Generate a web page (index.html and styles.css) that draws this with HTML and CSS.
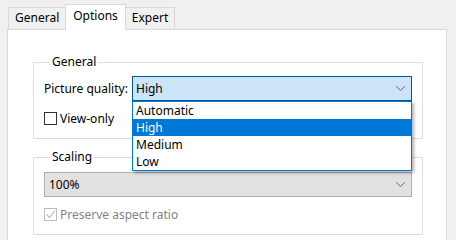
FILE: index.html
```html
<!DOCTYPE html>
<html>
<head>
	<title>Options</title>
	<meta charset="utf-8">
	<link rel="stylesheet" href="styles.css">
</head>
<body>
<div class="tabs">
	<div class="tab">General</div>
	<div class="tab active">Options</div>
	<div class="tab">Expert</div>
</div>
<div class="panel">
	<fieldset class="group">
		<legend>General</legend>
		<div class="row">
			<label class="field-label">Picture quality:</label>
			<div class="combo-wrap">
				<div class="combo focused">
					<span>High</span>
					<svg class="chevron" width="9" height="5" viewBox="0 0 9 5"><path d="M0.5 0.5l4 4 4-4" fill="none" stroke="#606060" stroke-width="1"/></svg>
				</div>
				<ul class="dropdown">
					<li>Automatic</li>
					<li class="selected">High</li>
					<li>Medium</li>
					<li>Low</li>
				</ul>
			</div>
		</div>
		<div class="check-row">
			<span class="box"></span>
			<span>View-only</span>
		</div>
	</fieldset>

	<fieldset class="group scaling">
		<legend>Scaling</legend>
		<div class="combo disabled-combo">
			<span>100%</span>
			<svg class="chevron" width="9" height="5" viewBox="0 0 9 5"><path d="M0.5 0.5l4 4 4-4" fill="none" stroke="#606060" stroke-width="1"/></svg>
		</div>
		<div class="check-row disabled">
			<span class="box">
				<svg width="11" height="11" viewBox="0 0 11 11"><path d="M1.5 5.5l3 3 5.5-7" fill="none" stroke="#bcbcbc" stroke-width="1.2"/></svg>
			</span>
			<span>Preserve aspect ratio</span>
		</div>
	</fieldset>
</div>
</body>
</html>
```

FILE: styles.css
```css
body{
	margin: 0;
	background-color: #f0f0f0;
	font-family: "Noto Sans", sans-serif;
	font-size: 12px;
	color: #000;
	overflow: hidden;
}
.tabs{
	display: flex;
	align-items: flex-end;
	height: 29px;
	padding-left: 8px;
}
.tab{
	height: 21px;
	line-height: 20px;
	padding: 0 6px;
	border: 1px solid #d9d9d9;
	border-bottom: none;
	background-color: #f0f0f0;
}
.tab + .tab{
	margin-left: -1px;
}
.tab.active{
	position: relative;
	z-index: 1;
	height: 25px;
	line-height: 22px;
	margin-bottom: -1px;
	padding: 0 7px;
	background-color: #fff;
}
.panel{
	width: 440px;
	height: 211px;
	margin-left: 7px;
	padding: 0 23px 0 25px;
	box-sizing: border-box;
	background-color: #fff;
	border: 1px solid #d9d9d9;
	border-bottom: none;
}
.group{
	margin: 24px 0 0 0;
	padding: 6px 10px 12px 10px;
	border: 1px solid #dcdcdc;
	min-width: 0;
}
.group legend{
	margin-left: 6px;
	padding: 0 2px;
	line-height: 16px;
}
.scaling{
	margin-top: 10px;
	padding-top: 7px;
}
.row{
	display: flex;
	align-items: center;
}
.field-label{
	width: 88px;
}
.combo-wrap{
	flex: 1;
	position: relative;
}
.combo{
	display: flex;
	align-items: center;
	justify-content: space-between;
	height: 25px;
	box-sizing: border-box;
	padding: 0 6px 0 3px;
	border: 1px solid #adadad;
}
.combo.focused{
	background-color: #cce4f7;
	border-color: #005499;
}
.disabled-combo{
	background-color: #e1e1e1;
	padding-left: 4px;
}
.dropdown{
	position: absolute;
	top: 100%;
	left: 0;
	right: 0;
	z-index: 2;
	margin: 0;
	padding: 0;
	list-style: none;
	background-color: #fff;
	border: 1px solid #0078d7;
	box-shadow: 2px 2px 3px rgba(0,0,0,0.3);
}
.dropdown li{
	height: 17px;
	line-height: 17px;
	padding-left: 3px;
}
.dropdown li.selected{
	background-color: #0078d7;
	color: #fff;
}
.check-row{
	display: flex;
	align-items: center;
	margin-top: 10px;
	height: 15px;
}
.box{
	width: 13px;
	height: 13px;
	box-sizing: border-box;
	border: 1px solid #333;
	margin-right: 3px;
	background-color: #fff;
	display: flex;
	align-items: center;
	justify-content: center;
}
.disabled{
	color: #838383;
}
.disabled .box{
	border-color: #bcbcbc;
}
```
